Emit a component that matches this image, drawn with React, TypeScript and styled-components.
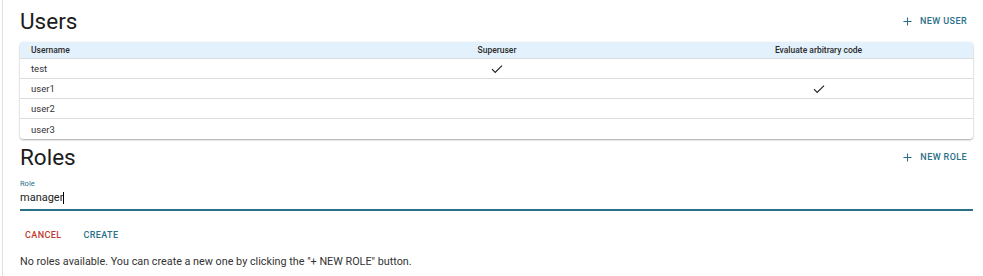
import * as React from 'react';
import styled, { createGlobalStyle } from 'styled-components';

const GlobalStyle = createGlobalStyle`
  html, body {
    margin: 0;
    padding: 0;
    background: #fff;
    font-family: Roboto, "Liberation Sans", sans-serif;
    color: #222;
  }
`;

const teal = '#2a7088';

const Page = styled.div`
  margin-left: 2px;
  border-left: 1px solid #e2e2e2;
  padding: 0 10px 0 16px;
  min-height: 276px;
  box-sizing: border-box;
`;

const TitleBar = styled.div<{ $height: number }>`
  display: flex;
  align-items: center;
  justify-content: space-between;
  height: ${p => p.$height}px;
  padding-right: 6px;
`;

const Title = styled.h1`
  margin: 0;
  font-size: 22.5px;
  font-weight: 400;
  line-height: 1;
  color: #1c1c1c;
  padding-left: 1px;
`;

const TextButton = styled.button<{ $color: string }>`
  display: inline-flex;
  align-items: center;
  gap: 8px;
  border: 0;
  background: none;
  padding: 0;
  font-family: inherit;
  font-size: 9px;
  font-weight: 500;
  letter-spacing: 0.4px;
  text-transform: uppercase;
  color: ${p => p.$color};
  cursor: pointer;
`;

const Plus = styled.svg`
  width: 9px;
  height: 9px;
`;

const Table = styled.div`
  border-radius: 4px;
  overflow: hidden;
  box-shadow: 0 1px 2px rgba(0, 0, 0, 0.35), 0 0 1px rgba(0, 0, 0, 0.12);
  margin-left: 1px;
`;

const Row = styled.div<{ $head?: boolean }>`
  display: grid;
  grid-template-columns: 310px 334px 1fr;
  box-sizing: border-box;
  height: ${p => (p.$head ? 17 : 20)}px;
  align-items: center;
  background: ${p => (p.$head ? '#e3f1fc' : '#fff')};
  border-bottom: 1px solid #dcdcdc;
  font-size: ${p => (p.$head ? 8.5 : 9.5)}px;
  font-weight: ${p => (p.$head ? 500 : 400)};
  color: ${p => (p.$head ? '#2a2a2a' : '#333')};
  &:last-child {
    border-bottom: 0;
  }
`;

const Cell = styled.div<{ $center?: boolean }>`
  padding-left: ${p => (p.$center ? 0 : 11)}px;
  display: flex;
  justify-content: ${p => (p.$center ? 'center' : 'flex-start')};
`;

const Check = styled.svg`
  width: 12px;
  height: 10px;
`;

const Field = styled.div`
  margin-left: 1px;
  border-bottom: 2px solid ${teal};
  padding-top: 4px;
`;

const Label = styled.div`
  font-size: 7.5px;
  color: ${teal};
  line-height: 9px;
`;

const Value = styled.div`
  font-size: 11px;
  color: #222;
  line-height: 14px;
  padding: 3px 0 4px;
  display: flex;
  align-items: center;
`;

const Caret = styled.span`
  display: inline-block;
  width: 1px;
  height: 12px;
  background: #000;
`;

const Actions = styled.div`
  display: flex;
  gap: 22px;
  padding: 18px 0 0 6px;
  height: 12px;
  align-items: center;
`;

const Message = styled.p`
  margin: 14px 0 0 1px;
  font-size: 10.8px;
  color: #333;
`;

const PlusIcon = () => (
  <Plus viewBox="0 0 10 10">
    <path d="M5 0.5v9M0.5 5h9" stroke="currentColor" strokeWidth="1.2" />
  </Plus>
);

const Tick = () => (
  <Check viewBox="0 0 12 10">
    <path d="M1 5.2l3.2 3.2L11 1.6" stroke="#222" strokeWidth="1.2" fill="none" />
  </Check>
);

const users = [
  { name: 'test', su: true, code: false },
  { name: 'user1', su: false, code: true },
  { name: 'user2', su: false, code: false },
  { name: 'user3', su: false, code: false },
];

export default function App() {
  return (
    <Page>
      <GlobalStyle />
      <TitleBar $height={42}>
        <Title>Users</Title>
        <TextButton $color={teal}>
          <PlusIcon />
          New user
        </TextButton>
      </TitleBar>
      <Table>
        <Row $head>
          <Cell>Username</Cell>
          <Cell $center>Superuser</Cell>
          <Cell $center>Evaluate arbitrary code</Cell>
        </Row>
        {users.map(u => (
          <Row key={u.name}>
            <Cell>{u.name}</Cell>
            <Cell $center>{u.su && <Tick />}</Cell>
            <Cell $center>{u.code && <Tick />}</Cell>
          </Row>
        ))}
      </Table>
      <TitleBar $height={36}>
        <Title>Roles</Title>
        <TextButton $color={teal}>
          <PlusIcon />
          New role
        </TextButton>
      </TitleBar>
      <Field>
        <Label>Role</Label>
        <Value>
          manager
          <Caret />
        </Value>
      </Field>
      <Actions>
        <TextButton $color="#c0392f">Cancel</TextButton>
        <TextButton $color={teal}>Create</TextButton>
      </Actions>
      <Message>
        No roles available. You can create a new one by clicking the "+ NEW ROLE" button.
      </Message>
    </Page>
  );
}
